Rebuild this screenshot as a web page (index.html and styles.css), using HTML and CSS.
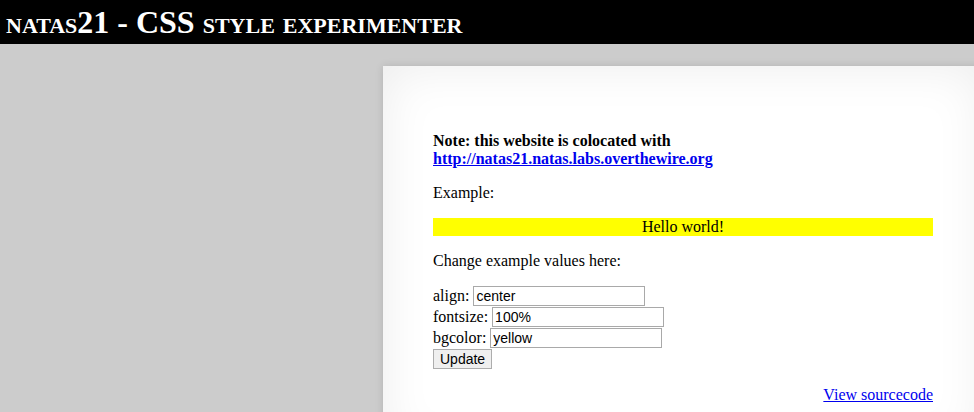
FILE: index.html
```html
<!DOCTYPE html>
<html>
<head>
<meta charset="utf-8">
<title>natas21</title>
<link rel="stylesheet" href="styles.css">
</head>
<body>
<h1 class="title">natas21 - CSS style experimenter</h1>
<div class="content">
  <p class="note"><b>Note: this website is colocated with <a href="#">http://natas21.natas.labs.overthewire.org</a></b></p>
  <p>Example:</p>
  <div class="example">Hello world!</div>
  <p>Change example values here:</p>
  <form class="form">
    <div class="row">align:&nbsp;<input class="field" type="text" value="center"></div>
    <div class="row">fontsize:&nbsp;<input class="field" type="text" value="100%"></div>
    <div class="row">bgcolor:&nbsp;<input class="field" type="text" value="yellow"></div>
    <div class="row"><button class="btn" type="button">Update</button></div>
  </form>
  <div class="viewsource"><a href="#">View sourcecode</a></div>
</div>
</body>
</html>
```
FILE: styles.css
```css
html {
  overflow: hidden;
}
body {
  margin: 0;
  padding: 0;
  background: #cccccc;
  font-family: "Liberation Serif", "Times New Roman", serif;
  font-size: 16px;
  color: #000;
}
.title {
  margin: 0;
  background: #000;
  color: #fff;
  font-size: 32px;
  font-weight: bold;
  font-variant: small-caps;
  line-height: 37px;
  padding: 4px 6px 3px 6px;
}
.content {
  margin: 22px 0 0 383px;
  width: 500px;
  padding: 50px;
  background: #fff;
  box-shadow: 0 0 8px rgba(0, 0, 0, 0.12), inset 0 0 50px rgba(0, 0, 0, 0.08);
}
.content p {
  margin: 16px 0;
}
a {
  color: #0000ee;
}
.example {
  background: yellow;
  text-align: center;
  font-size: 100%;
}
.form {
  margin: 16px 0;
}
.row {
  display: flex;
  align-items: baseline;
  height: 21px;
}
.field {
  box-sizing: border-box;
  width: 172px;
  height: 20px;
  margin: 0;
  padding: 0 2px;
  border: 1px solid #a9a9a9;
  font-family: "Liberation Sans", Arial, sans-serif;
  font-size: 14px;
  color: #000;
  background: #fff;
}
.btn {
  box-sizing: border-box;
  height: 20px;
  width: 59px;
  margin: 0;
  padding: 0 6px;
  border: 1px solid #adadad;
  border-radius: 0;
  background: #efefef;
  font-family: "Liberation Sans", Arial, sans-serif;
  font-size: 14px;
  color: #000;
}
.viewsource {
  text-align: right;
  margin-top: 16px;
}
```
